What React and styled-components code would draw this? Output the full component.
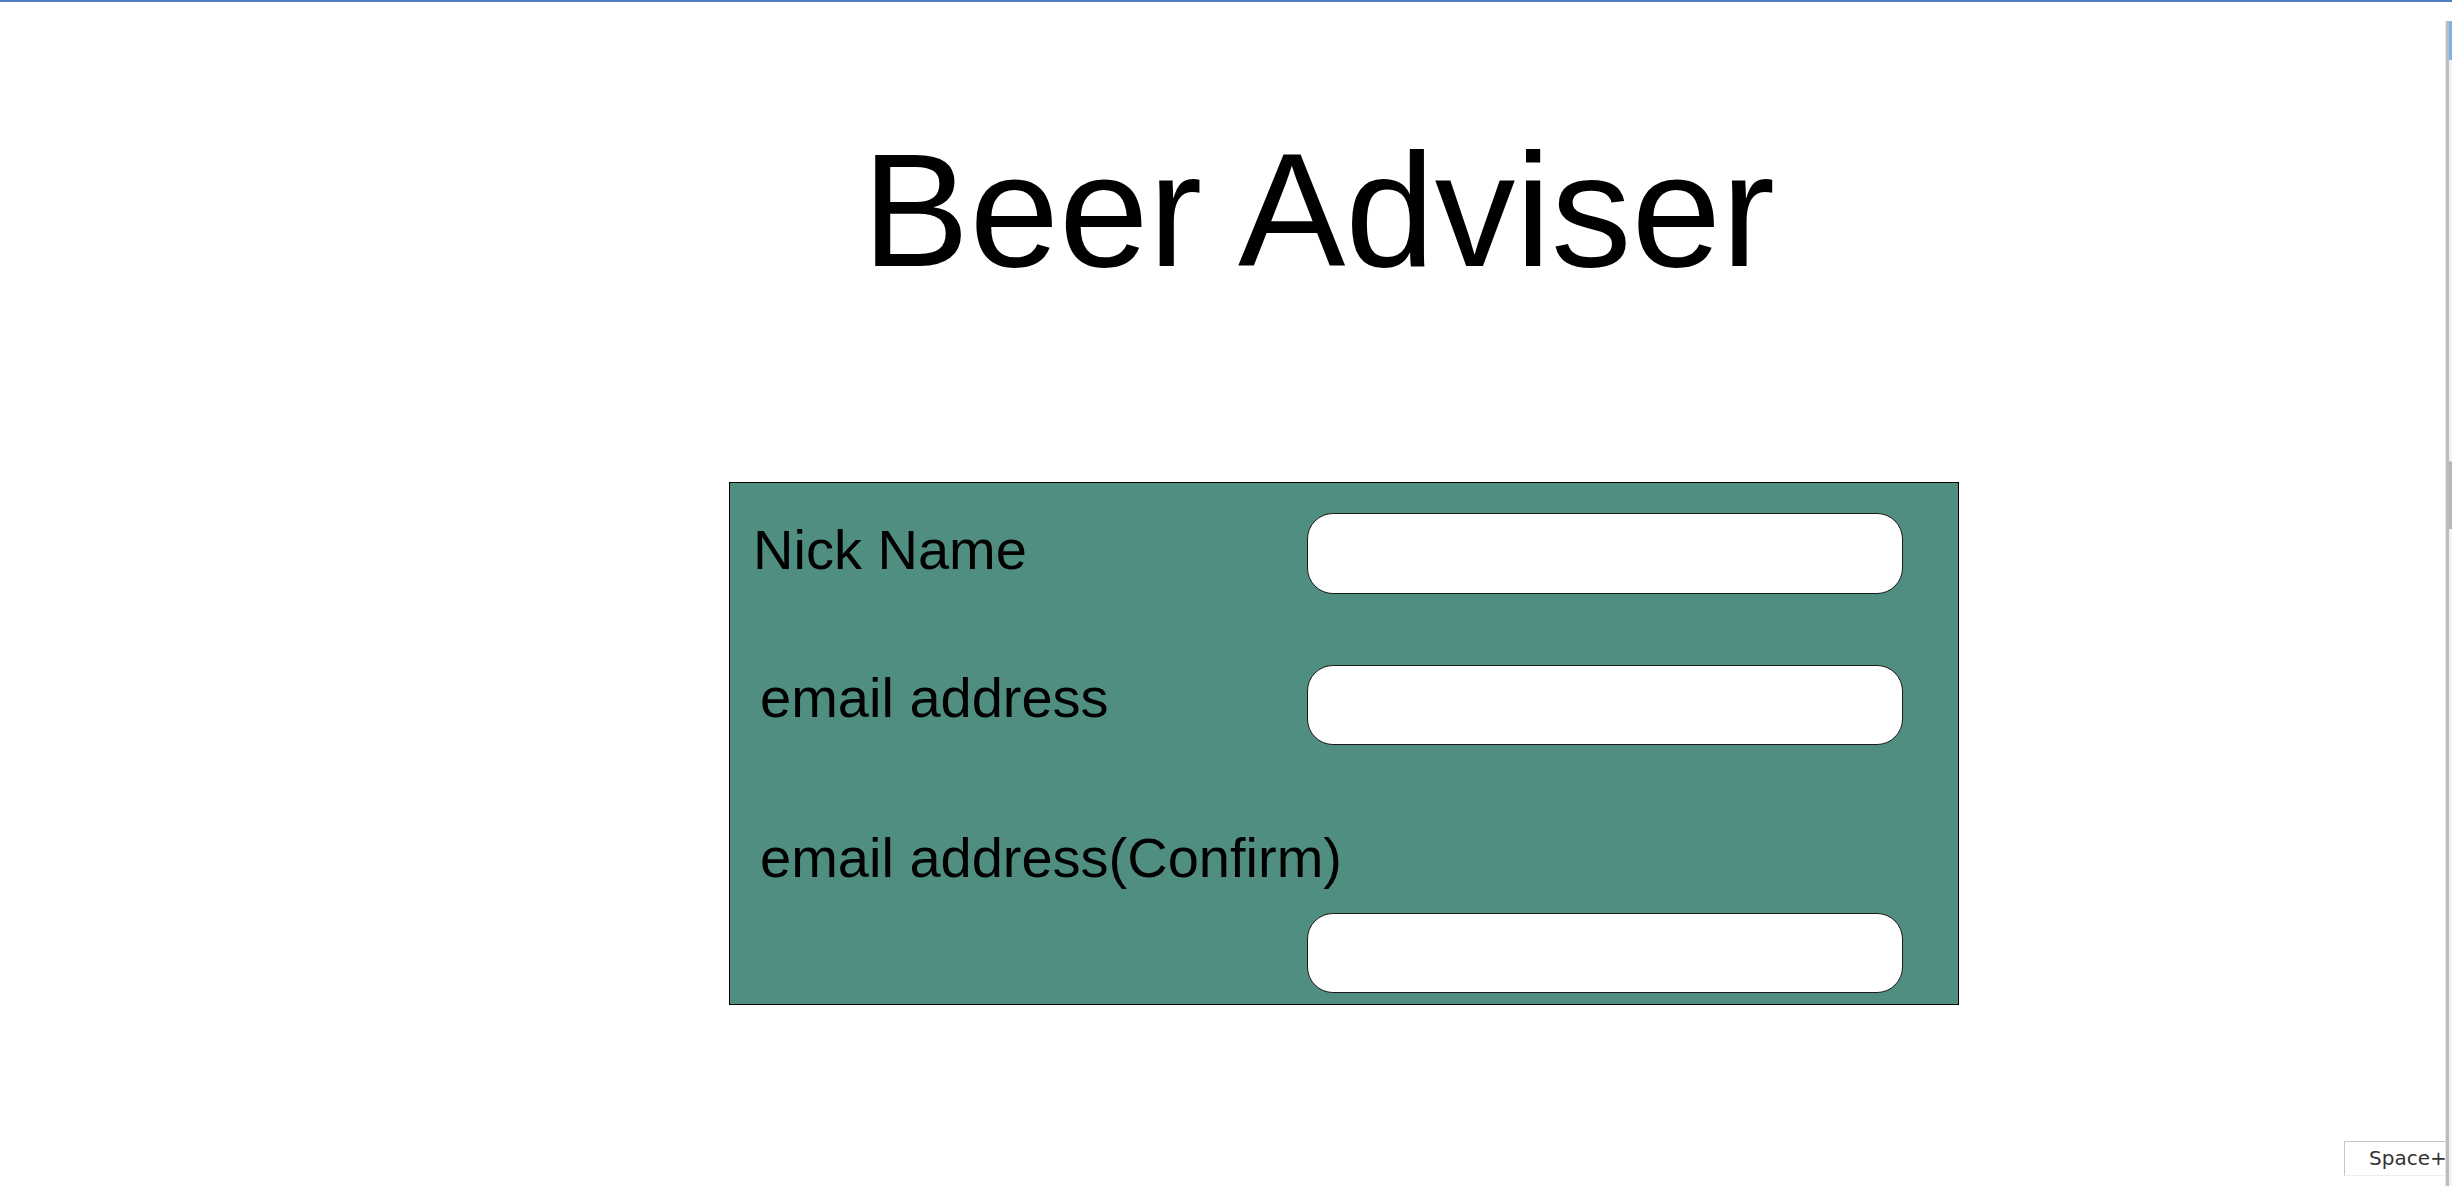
import React from "react";
import styled, { createGlobalStyle } from "styled-components";

const GlobalStyle = createGlobalStyle`
  html, body {
    margin: 0;
    padding: 0;
    background: #ffffff;
    overflow: hidden;
  }
  body {
    font-family: "Liberation Sans", Arial, sans-serif;
    color: #000;
  }
`;

const Page = styled.div`
  min-height: 1186px;
  box-sizing: border-box;
  border-top: 2px solid #4f7fbf;
`;

const Title = styled.h1`
  margin: 0;
  padding: 116px 0 0 862px;
  height: 190px;
  font-size: 161px;
  font-weight: normal;
  line-height: normal;
`;

const Panel = styled.form`
  box-sizing: border-box;
  width: 1230px;
  margin: 174px 0 0 729px;
  padding: 30px 55px 11px 20px;
  border: 1px solid #000;
  background: #508e82;
  display: flex;
  flex-direction: column;
`;

const Row = styled.div`
  display: flex;
  justify-content: space-between;
  align-items: flex-start;
  margin-top: ${(p) => p.$gap || 0}px;
`;

const InputRow = styled.div`
  display: flex;
  justify-content: flex-end;
  margin-top: ${(p) => p.$gap || 0}px;
`;

const Label = styled.label`
  display: block;
  font-size: 56px;
  line-height: 64px;
  white-space: nowrap;
  margin-top: ${(p) => p.$top || 0}px;
  padding-left: ${(p) => p.$indent || 0}px;
`;

const TextInput = styled.input`
  box-sizing: border-box;
  width: 596px;
  height: ${(p) => p.$h || 80}px;
  border: 1px solid #1a1a1a;
  border-radius: 26px;
  background: #fff;
  outline: none;
  padding: 0 18px;
  font-size: 32px;
  font-family: "Liberation Sans", Arial, sans-serif;
`;

const ScrollStrip = styled.div`
  position: fixed;
  top: 21px;
  bottom: 0;
  right: 0;
  width: 7px;
  background: linear-gradient(
    to right,
    #e6e6e6 0,
    #e6e6e6 1px,
    #bdbdbd 1px,
    #bdbdbd 4px,
    #f2f2f2 4px
  );
`;

const Thumb = styled.div`
  position: absolute;
  right: 0;
  width: 3px;
  top: ${(p) => p.$top}px;
  height: ${(p) => p.$h}px;
  background: ${(p) => p.$color};
  border-top: 1px solid ${(p) => p.$edge || p.$color};
`;

const HintBox = styled.div`
  position: fixed;
  left: 2344px;
  top: 1141px;
  width: 110px;
  height: 35px;
  box-sizing: border-box;
  border: 1px solid #c4c4c4;
  border-bottom-color: #eeeeee;
  background: #fff;
  padding-left: 24px;
  font-family: "DejaVu Sans", Verdana, sans-serif;
  font-size: 20px;
  line-height: 33px;
  color: #333;
  white-space: nowrap;
  overflow: hidden;
`;

export default function App() {
  return (
    <>
      <GlobalStyle />
      <Page>
        <Title>Beer Adviser</Title>
        <Panel onSubmit={(e) => e.preventDefault()}>
          <Row>
            <Label $top={5} $indent={3}>Nick Name</Label>
            <TextInput type="text" $h={81} />
          </Row>
          <Row $gap={71}>
            <Label $top={1} $indent={10}>email address</Label>
            <TextInput type="email" />
          </Row>
          <Row $gap={81}>
            <Label $indent={10}>email address(Confirm)</Label>
          </Row>
          <InputRow $gap={23}>
            <TextInput type="email" />
          </InputRow>
        </Panel>
      </Page>
      <HintBox>Space+</HintBox>
      <ScrollStrip>
        <Thumb $top={0} $h={38} $color="#7eb2ea" />
        <Thumb $top={440} $h={67} $color="#b5b5b5" $edge="#d8d8d8" />
      </ScrollStrip>
    </>
  );
}
